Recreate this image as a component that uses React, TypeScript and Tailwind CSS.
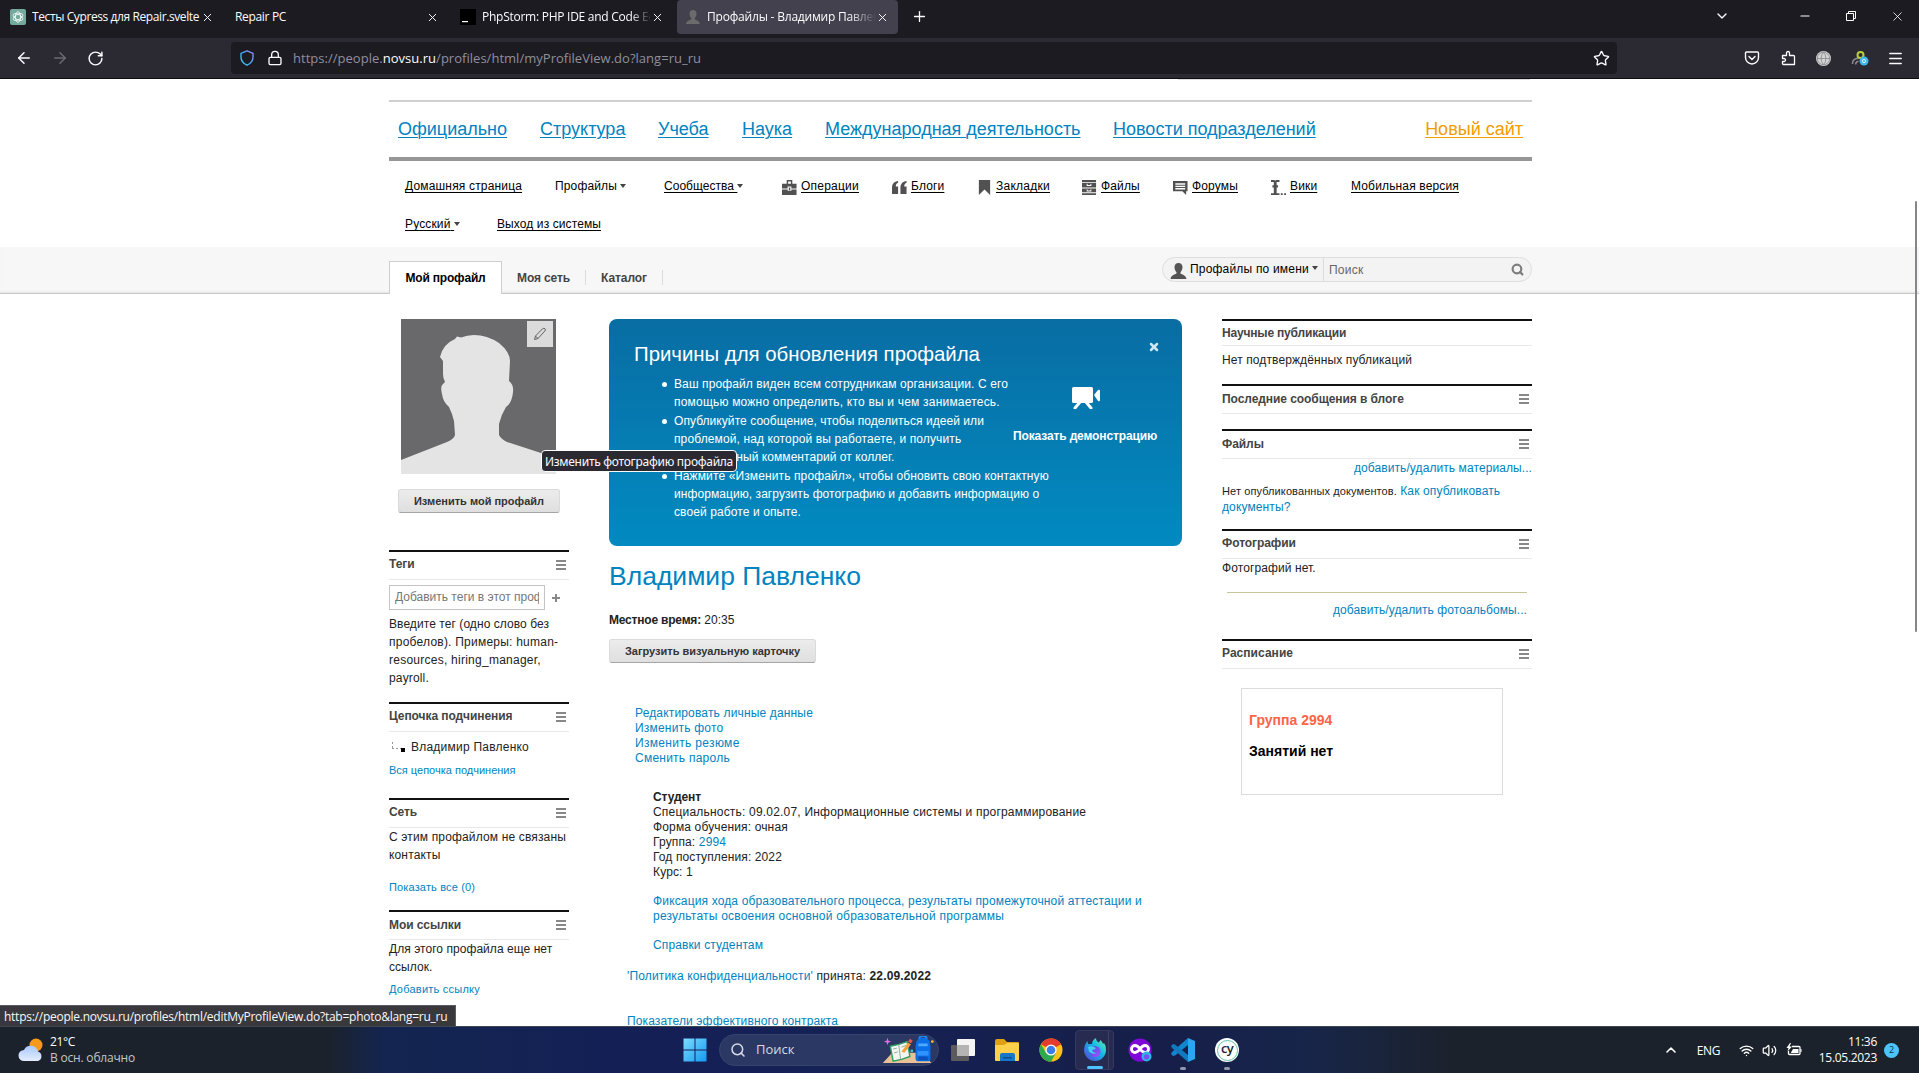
import React from "react";
import {
  ArrowLeft,
  ArrowRight,
  ChevronDown,
  ChevronUp,
  Globe,
  Lock,
  Menu,
  Minus,
  Plus,
  RotateCw,
  Search,
  Star,
  Volume2,
  Wifi,
  X,
} from "lucide-react";

/* ---------- browser chrome ---------- */

function Tab({ icon, title, cls, active }: { icon?: React.ReactNode; title: string; cls: string; active?: boolean }) {
  return (
    <div className={"mr-1 flex h-[34px] w-[221px] items-center pl-2 " + (active ? "rounded bg-[#42414d]" : "")}>
      {icon && <span className="mr-[6px] flex h-4 w-4 shrink-0 items-center justify-center">{icon}</span>}
      <span className={"grow overflow-hidden whitespace-nowrap text-[12px] text-[#fbfbfe] " + cls}>{title}</span>
      <X className="mr-[9px] h-[13px] w-[13px] shrink-0 text-[#fbfbfe]" strokeWidth={1.8} />
    </div>
  );
}

function BrowserChrome() {
  return (
    <header className="shrink-0 font-['Open_Sans',sans-serif]">
      <div className="flex h-[38px] bg-[#1c1b22]">
        <div className="flex grow pl-[2px]">
          <Tab
            title="Тесты Cypress для Repair.svelte"
            cls="tracking-[-0.4px]"
            icon={
              <svg viewBox="0 0 16 16" className="h-4 w-4">
                <rect width="16" height="16" rx="2" fill="#74a99b" />
                <g fill="none" stroke="#fff" strokeWidth="0.8">
                  <ellipse cx="8" cy="8" rx="2.600" ry="5.300" />
                  <ellipse cx="8" cy="8" rx="2.600" ry="5.300" transform="rotate(60 8 8)" />
                  <ellipse cx="8" cy="8" rx="2.600" ry="5.300" transform="rotate(120 8 8)" />
                </g>
              </svg>
            }
          />
          <Tab title="Repair PC" cls="tracking-[-0.33px]" />
          <Tab
            title="PhpStorm: PHP IDE and Code Editor"
            cls="tracking-[-0.26px] [mask-image:linear-gradient(to_right,black_88%,transparent)]"
            icon={
              <svg viewBox="0 0 16 16" className="h-4 w-4">
                <rect width="16" height="16" fill="#000" />
                <rect x="2" y="12" width="6" height="1.200" fill="#fff" />
              </svg>
            }
          />
          <Tab
            active
            title="Профайлы - Владимир Павленко"
            cls="tracking-[-0.2px] [mask-image:linear-gradient(to_right,black_84%,transparent)]"
            icon={<PersonIcon className="h-[14px] w-[14px] text-[#6b6b6b]" />}
          />
          <Plus className="mt-[8px] ml-[9px] h-[17px] w-[17px] text-[#fbfbfe]" strokeWidth={1.8} />
        </div>
        <div className="flex items-center pb-[6px] text-[#fbfbfe]">
          <ChevronDown className="mr-[68px] h-4 w-4" strokeWidth={2} />
          <Minus className="mr-[33px] h-[14px] w-[14px]" strokeWidth={1.8} />
          <svg viewBox="0 0 12 12" className="mr-[33px] h-3 w-3" fill="none" stroke="#fff">
            <path d="M1.500 3.500h7v7h-7zM3.500 3.500v-2h7v7h-2" />
          </svg>
          <X className="mr-[14px] h-[15px] w-[15px]" strokeWidth={1.3} />
        </div>
      </div>
      <div className="flex h-[41px] items-center border-b border-[#0d0c11] bg-[#2b2a33] text-[#fbfbfe]">
        <div className="flex w-[231px] items-center pl-[15px]">
          <ArrowLeft className="h-[18px] w-[18px]" strokeWidth={2} />
          <ArrowRight className="ml-[18px] h-[18px] w-[18px] text-[#6b6a72]" strokeWidth={2} />
          <RotateCw className="ml-[18px] h-[17px] w-[17px]" strokeWidth={2.1} />
        </div>
        <div className="flex h-8 w-[1386px] items-center rounded bg-[#1c1b22]">
          <svg viewBox="0 0 16 16" className="ml-[8px] h-4 w-4" fill="none">
            <defs>
              <linearGradient id="shield" x1="1" y1="0" x2="0" y2="1">
                <stop offset="0" stopColor="#9a84f5" />
                <stop offset="0.500" stopColor="#3fa6f2" />
                <stop offset="1" stopColor="#3ed0ee" />
              </linearGradient>
            </defs>
            <path d="M8 .800L14 3.300V7q0 5.500-6 8.200Q2 12.500 2 7V3.300z" stroke="url(#shield)" strokeWidth="1.400" strokeLinejoin="round" />
          </svg>
          <Lock className="ml-[12px] h-4 w-4" strokeWidth={2} />
          <span className="ml-[10px] grow pt-px text-[13px] tracking-[0.024px] text-[#8f8f9d]">
            https://people.<span className="text-[#fbfbfe]">novsu.ru</span>/profiles/html/myProfileView.do?lang=ru_ru
          </span>
          <Star className="mr-[7px] h-[17px] w-[17px]" strokeWidth={1.9} />
        </div>
        <div className="flex grow items-center justify-end pr-[15px]">
          <svg viewBox="0 0 16 16" className="h-4 w-4" fill="none" stroke="currentColor" strokeWidth="1.400" strokeLinecap="round">
            <path d="M2.500 2h11a1 1 0 0 1 1 1v4.500a6.500 6.500 0 0 1-13 0V3a1 1 0 0 1 1-1z" />
            <path d="M5 6.500l3 3 3-3" />
          </svg>
          <svg viewBox="0 0 16 16" className="ml-[20px] h-4 w-4" fill="none" stroke="currentColor" strokeWidth="1.300" strokeLinejoin="round">
            <path d="M2.500 5.500h4V3a1.500 1.500 0 0 1 3 0v2.500h4a1 1 0 0 1 1 1v8h-11a1 1 0 0 1-1-1v-2h1.500a1.500 1.500 0 0 0 0-3H2.500z" />
          </svg>
          <span className="ml-[20px] h-[15px] w-[15px] rounded-full bg-[#d3d3d3] text-[#8d8c90]">
            <Globe className="h-[15px] w-[15px]" strokeWidth={1.4} />
          </span>
          <svg viewBox="0 0 18 18" className="ml-[20px] h-[18px] w-[18px]" fill="none">
            <path d="M1.500 15a5 5 0 0 1 6-5.500M5 15.500a2.200 2.200 0 0 1 2.500-3" stroke="#8a8a90" strokeWidth="1.600" />
            <circle cx="9.500" cy="6" r="3" stroke="#b9cf35" strokeWidth="2" />
            <circle cx="13" cy="12" r="4.500" fill="#3eb6ee" />
            <circle cx="13" cy="12" r="1.600" stroke="#dff3ff" strokeWidth="1" />
          </svg>
          <Menu className="ml-[18px] h-[17px] w-[17px]" strokeWidth={2.1} />
        </div>
      </div>
    </header>
  );
}

/* ---------- small icons of the portal ---------- */

function PersonIcon({ className }: { className: string }) {
  return (
    <svg viewBox="0 0 16 16" className={className} fill="currentColor">
      <path d="M8 0c2.600 0 4 1.800 4 4.300 0 2-.9 3.900-2 4.900v1.300c1 .9 5.500 1.500 6 5.500H0c.5-4 5-4.600 6-5.500V9.200c-1.100-1-2-2.900-2-4.900C4 1.800 5.400 0 8 0z" />
    </svg>
  );
}

const glyphs = {
  ops: (
    <>
      <path d="M5 0h6v4h4.500v5H10V7H6v2H0V4h5zM6.500 1.500V4h3V1.500zM0 10h6v1.500h4V10h5.500v6H0z" fillRule="evenodd" />
      <path d="M7.300 8h1.500v3H7.300z" />
    </>
  ),
  blogs: <path d="M6.500 1v2C5 3.500 4 5 4 7h2.500v8H0V8c0-4 2.500-6.500 6.500-7zM15.500 1v2C14 3.500 13 5 13 7h2.500v8H9V8c0-4 2.500-6.500 6.500-7z" />,
  marks: <path d="M2 0h12v16l-6-6-6 6z" />,
  files: (
    <path
      d="M0 0h15v2H0zM0 3h15v5H0zM0 9h15v4H0zM0 14h15v2H0zM5 4v2.500h5V4H9v1.300H6V4zM5 10v2.300h5V10H9v1.200H6V10z"
      fillRule="evenodd"
    />
  ),
  forums: <path d="M0 1h15.500v11H14v4l-4-4H0zM2.500 3.500V5h10.500V3.500zM2.500 6v1.500h10.500V6zM2.500 8.500V10h10.500V8.500z" fillRule="evenodd" />,
  wiki: <path d="M0 0h3.500l1 .7L5.500 0H9v2H6v3.500h1.500V8H6v6h3v2H0v-2h3V8H1.500V5.500H3V2H0zM10.500 14h2v2h-2zM14 14h2v2h-2z" />,
};

function Caret({ cls }: { cls: string }) {
  return <span className={"inline-block border-x-[3.500px] border-t-4 border-x-transparent border-t-[#444] align-middle " + cls} />;
}

function MenuLink({
  w,
  icon,
  caret,
  plain,
  cls = "tracking-[0.15px]",
  children,
}: {
  w: string;
  icon?: keyof typeof glyphs;
  caret?: boolean;
  plain?: boolean;
  cls?: string;
  children: string;
}) {
  return (
    <span className={"flex shrink-0 items-center whitespace-nowrap " + w}>
      {icon && (
        <svg viewBox="0 0 16 16" className="mt-[3px] mr-[4px] h-[15px] w-[15px] shrink-0" fill="#515151">
          {glyphs[icon]}
        </svg>
      )}
      <span className={cls + (plain ? "" : " underline underline-offset-2")}>
        {children}
        {caret && !plain && "\u00a0"}
      </span>
      {caret && <Caret cls={plain ? "ml-[3px]" : "ml-0"} />}
    </span>
  );
}

function MainNav() {
  const link = "shrink-0 whitespace-nowrap underline underline-offset-2 decoration-1";
  return (
    <>
      <div className="mt-[21px] flex h-[61px] items-center border-t-2 border-b-4 border-t-[#cfcfcf] border-b-[#969696] pr-[9px] pl-[9px] text-[18px] text-[#0083c0]">
        <a className={link + " w-[142px]"}>Официально</a>
        <a className={link + " w-[118px]"}>Структура</a>
        <a className={link + " w-[84px]"}>Учеба</a>
        <a className={link + " w-[83px]"}>Наука</a>
        <a className={link + " w-[288px]"}>Международная деятельность</a>
        <a className={link}>Новости подразделений</a>
        <a className={link + " ml-auto text-[#f29c00]"}>Новый сайт</a>
      </div>
      <nav className="h-[86px] pt-[6px] pl-[16px] text-[12px] text-black">
        <div className="flex h-[38px] items-center">
          <MenuLink w="w-[150px]" cls="tracking-[0.17px]">Домашняя страница</MenuLink>
          <MenuLink w="w-[109px]" plain caret>Профайлы</MenuLink>
          <MenuLink w="w-[118px]" caret cls="tracking-[0.03px]">Сообщества</MenuLink>
          <MenuLink w="w-[110px]" icon="ops" cls="tracking-[0.23px]">Операции</MenuLink>
          <MenuLink w="w-[85px]" icon="blogs">Блоги</MenuLink>
          <MenuLink w="w-[105px]" icon="marks" cls="tracking-[0.26px]">Закладки</MenuLink>
          <MenuLink w="w-[91px]" icon="files">Файлы</MenuLink>
          <MenuLink w="w-[98px]" icon="forums">Форумы</MenuLink>
          <MenuLink w="w-[80px]" icon="wiki">Вики</MenuLink>
          <MenuLink w="">Мобильная версия</MenuLink>
        </div>
        <div className="flex h-[38px] items-center">
          <MenuLink w="w-[92px]" caret>Русский</MenuLink>
          <MenuLink w="" cls="tracking-[0.1px]">Выход из системы</MenuLink>
        </div>
      </nav>
    </>
  );
}

function TabStrip() {
  return (
    <div className="h-[47px] border-b border-[#c9c9c9] bg-[#f7f7f7] pl-[389px] shadow-[inset_0_-2px_2px_-1px_#e4e4e4]">
      <div className="flex h-[47px] w-[1143px] items-end text-[12px] font-bold text-[#444]">
        <span className="flex h-[33px] w-[113px] items-center justify-center border border-b-0 border-[#cfcfcf] bg-white tracking-[-0.19px] text-black">
          Мой профайл
        </span>
        <span className="flex h-[33px] items-center pl-[15px] tracking-[-0.12px]">Моя сеть</span>
        <span className="mb-[9px] ml-[15px] h-[15px] w-px bg-[#dcdcdc]" />
        <span className="flex h-[33px] items-center pl-[15px] tracking-[-0.07px]">Каталог</span>
        <span className="mb-[9px] ml-[15px] h-[15px] w-px bg-[#dcdcdc]" />
        <div className="mb-[12px] ml-auto flex h-[25px] w-[370px] items-center rounded-full border border-[#dedede] bg-[#f3f3f3] font-normal">
          <PersonIcon className="mt-[2px] ml-[7px] h-4 w-[17px] text-[#555]" />
          <span className="ml-[3px] pb-px tracking-[0.19px] whitespace-nowrap text-black">Профайлы по имени</span>
          <span className="mb-[4px]">
            <Caret cls="ml-[3px]" />
          </span>
          <span className="ml-[5px] h-full w-px bg-[#dcdcdc]" />
          <span className="ml-[5px] grow tracking-[0.3px] text-[#666]">Поиск</span>
          <Search className="mr-[7px] h-[13px] w-[13px] text-[#7d7d7d]" strokeWidth={4} />
        </div>
      </div>
    </div>
  );
}

/* ---------- widgets ---------- */

function Head({
  title,
  menu = true,
  cls = "tracking-[-0.07px]",
  pad = "pt-[3px]",
}: {
  title: string;
  menu?: boolean;
  cls?: string;
  pad?: string;
}) {
  return (
    <div
      className={
        "flex items-start justify-between border-t-2 border-b border-t-[#111] border-b-[#e8e8e8] " +
        (menu ? "h-[30px]" : "h-[27px]")
      }
    >
      <h2 className={"text-[12px] leading-[18px] font-bold whitespace-nowrap text-[#444] " + pad + " " + cls}>{title}</h2>
      {menu && (
        <span className="mt-[8px] mr-[3px] flex w-[10px] flex-col gap-[2px]">
          <i className="h-[2px] bg-[#888]" />
          <i className="h-[2px] bg-[#888]" />
          <i className="h-[2px] bg-[#888]" />
        </span>
      )}
    </div>
  );
}

function Button({ w, children }: { w: string; children: string }) {
  return (
    <button
      className={
        "block h-[24px] rounded-[3px] border border-[#dadada] border-b-[#a5a5a5] bg-linear-to-b from-[#ececec] to-[#dfdfdf] pb-px text-center text-[11px] leading-[22px] font-bold whitespace-nowrap text-[#333] " +
        w
      }
    >
      {children}
    </button>
  );
}

function LeftColumn() {
  return (
    <aside className="w-[180px] text-[12px] leading-[18px] text-[#222]">
      <div className="relative ml-3 h-[155px] w-[155px]">
        <svg viewBox="0 0 155 155" className="h-[155px] w-[155px]">
          <rect width="155" height="155" fill="#69696b" />
          <path
            d="M0 155V141L46 123Q53 120 54 116L53 102Q51 94 48 88Q42 83 41 75Q39 67 42 65L44 63Q42 59 42 55V42L39 38Q42 25 54 20L56 17.500L60 18.500Q66 16 73 16Q86 16 98 24Q109 33 109 42L108 62Q113 66 112 73Q111 84 105 88Q100 96 98 105V116Q100 120 106 123L140 134L155 140V155Z"
            fill="#e4e4e4"
          />
        </svg>
        <span className="absolute top-[2px] right-[3px] flex h-[26px] w-[26px] items-center justify-center bg-[#dbdbdb]">
          <svg viewBox="0 0 14 14" className="h-[14px] w-[14px]" fill="none" stroke="#555" strokeWidth="0.9">
            <path d="M1.500 12.500l1-3.500L9.500 1.800q1.500-1 2.500 0t-.2 2.200L5 11.500zM2.500 9l2.500 2.500" />
          </svg>
        </span>
      </div>
      <div className="mt-[15px] mb-[37px] pl-[9px]">
        <Button w="w-[162px]">Изменить мой профайл</Button>
      </div>

      <Head title="Теги" />
      <div className="mt-[5px] flex items-center">
        <div className="h-[25px] w-[156px] border border-[#c4c4c4] px-[5px] leading-[23px] text-[#777]">
          <div className="overflow-hidden whitespace-nowrap">Добавить теги в этот профайл</div>
        </div>
        <svg viewBox="0 0 8 8" className="ml-[7px] h-2 w-2" fill="#888">
          <path d="M3 0h2v3h3v2H5v3H3V5H0V3h3z" />
        </svg>
      </div>
      <p className="mt-[5px] mb-[15px]">
        <span className="tracking-[0.07px]">Введите тег (одно слово без</span>
        <br />
        <span className="tracking-[0.23px]">пробелов). Примеры: human-</span>
        <br />
        <span className="tracking-[0.25px]">resources, hiring_manager,</span>
        <br />
        <span className="tracking-[0.15px]">payroll.</span>
      </p>

      <Head title="Цепочка подчинения" />
      <div className="mt-[6px] flex h-[18px] items-center whitespace-nowrap">
        <svg viewBox="0 0 16 12" className="mt-[2px] ml-[2px] h-3 w-4">
          <path d="M1.500 0v6M1 6.500h10" stroke="#999" strokeDasharray="2 2" fill="none" />
          <path d="M10 6h4v4h-4z" fill="#000" />
        </svg>
        <span className="ml-[4px] tracking-[0.23px]">Владимир Павленко</span>
      </div>
      <a className="mt-[5px] mb-[19px] block text-[11px] text-[#0083c0]">Вся цепочка подчинения</a>

      <Head title="Сеть" />
      <p className="tracking-[0.15px] whitespace-nowrap">
        С этим профайлом не связаны
        <br />
        контакты
      </p>
      <a className="mt-[14px] mb-[14px] block text-[11px] tracking-[0.15px] text-[#0083c0]">Показать все (0)</a>

      <Head title="Мои ссылки" pad="pt-[4px]" />
      <p className="tracking-[0.05px] whitespace-nowrap">
        Для этого профайла еще нет
        <br />
        ссылок.
      </p>
      <a className="mt-[4px] block text-[11px] tracking-[0.24px] text-[#0083c0]">Добавить ссылку</a>
    </aside>
  );
}

function Bullet({ lines }: { lines: [string, string][] }) {
  return (
    <li className="relative mb-px">
      <i className="absolute top-[7px] -left-[12px] h-[5px] w-[5px] rounded-full bg-white" />
      {lines.map(([text, cls]) => (
        <div key={text} className={cls}>
          {text}
        </div>
      ))}
    </li>
  );
}

function MiddleColumn() {
  return (
    <main className="ml-[40px] w-[573px] text-[12px] text-[#222]">
      <section className="relative h-[227px] rounded-lg bg-linear-to-b from-[#086da3] to-[#018bc1] pt-[20px] pl-[25px] text-white">
        <h2 className="text-[20.4px] leading-[30px] tracking-[-0.02px] whitespace-nowrap">Причины для обновления профайла</h2>
        <ul className="mt-[6px] ml-[40px] leading-[18px] whitespace-nowrap">
          <Bullet
            lines={[
              ["Ваш профайл виден всем сотрудникам организации. С его", "tracking-[0.1px]"],
              ["помощью можно определить, кто вы и чем занимаетесь.", "tracking-[0.2px]"],
            ]}
          />
          <Bullet
            lines={[
              ["Опубликуйте сообщение, чтобы поделиться идеей или", "tracking-[0.06px]"],
              ["проблемой, над которой вы работаете, и получить", "tracking-[0.12px]"],
              ["моментальный комментарий от коллег.", "tracking-[0.06px]"],
            ]}
          />
          <Bullet
            lines={[
              ["Нажмите «Изменить профайл», чтобы обновить свою контактную", "tracking-[0.12px]"],
              ["информацию, загрузить фотографию и добавить информацию о", "tracking-[0.07px]"],
              ["своей работе и опыте.", "tracking-[0.1px]"],
            ]}
          />
        </ul>
        <X className="absolute top-[22px] right-[22px] h-[12px] w-[12px] text-[#cfe6f3]" strokeWidth={5} />
        <div className="absolute top-[68px] right-[25px] flex w-[144px] flex-col items-center">
          <svg viewBox="0 0 28 22" className="ml-[2px] h-[22px] w-[28px]" fill="#fff">
            <rect width="21" height="16" rx="1.500" />
            <path d="M22 8l4-5q2-1 2 1v9q0 2-2 1z" />
            <path d="M8 15L3 21M14 15l5 6" stroke="#fff" strokeWidth="3" strokeLinecap="round" />
          </svg>
          <b className="mt-[18px] leading-[18px] tracking-[-0.13px] whitespace-nowrap">Показать демонстрацию</b>
        </div>
      </section>

      <h1 className="mt-[11px] text-[26.5px] leading-[38px] text-[#0083c0]">Владимир Павленко</h1>
      <p className="mt-[16px] leading-[18px]">
        <b className="tracking-[-0.2px]">Местное время:</b> 20:35
      </p>
      <div className="mt-[10px]">
        <Button w="w-[207px]">Загрузить визуальную карточку</Button>
      </div>

      <div className="mt-[43px] ml-[26px] leading-[15px] tracking-[0.16px] text-[#0083c0]">
        <div>Редактировать личные данные</div>
        <div className="tracking-[0.2px]">Изменить фото</div>
        <div className="tracking-[0.32px]">Изменить резюме</div>
        <div className="tracking-[0.24px]">Сменить пароль</div>
      </div>
      <div className="mt-[24px] ml-[44px] leading-[15px] tracking-[0.14px] whitespace-nowrap">
        <b className="tracking-[-0.1px]">Студент</b>
        <div className="tracking-[0.2px]">Специальность: 09.02.07, Информационные системы и программирование</div>
        <div>Форма обучения: очная</div>
        <div>
          Группа: <a className="text-[#0083c0]">2994</a>
        </div>
        <div className="tracking-[0.11px]">Год поступления: 2022</div>
        <div>Курс: 1</div>
        <div className="mt-[14px] text-[#0083c0]">
          <div className="tracking-[0.15px]">Фиксация хода образовательного процесса, результаты промежуточной аттестации и</div>
          <div className="tracking-[0.22px]">результаты освоения основной образовательной программы</div>
        </div>
        <div className="mt-[14px] tracking-[0.12px] text-[#0083c0]">Справки студентам</div>
      </div>
      <p className="mt-[16px] ml-[18px] leading-[15px] tracking-[0.15px]">
        <a className="text-[#0083c0]">'Политика конфиденциальности'</a> принята: <b>22.09.2022</b>
      </p>
      <p className="mt-[30px] ml-[18px] leading-[15px] tracking-[0.13px] text-[#0083c0]">Показатели эффективного контракта</p>
    </main>
  );
}

function RightColumn() {
  return (
    <aside className="ml-[40px] w-[310px] text-[12px] leading-[18px] text-[#222]">
      <Head title="Научные публикации" menu={false} cls="tracking-[-0.18px]" />
      <p className="mt-[5px] mb-[15px] tracking-[0.11px]">Нет подтверждённых публикаций</p>
      <Head title="Последние сообщения в блоге" pad="pt-[4px]" />
      <div className="mt-[15px]">
        <Head title="Файлы" pad="pt-[4px]" />
      </div>
      <p className="text-right tracking-[0.085px] text-[#0083c0]">добавить/удалить материалы...</p>
      <p className="mt-[6px] mb-[14px] leading-[16px]">
        <span className="text-[11px] tracking-[0.1px]">Нет опубликованных документов.</span>{" "}
        <a className="tracking-[0.12px] text-[#0083c0]">
          Как опубликовать
          <br />
          документы?
        </a>
      </p>
      <Head title="Фотографии" />
      <p className="tracking-[0.1px]">Фотографий нет.</p>
      <div className="mx-[5px] mt-[15px] mb-[20px] border-t border-[#c8c59c] pt-[8px] text-right tracking-[0.07px] text-[#0083c0]">
        добавить/удалить фотоальбомы...
      </div>
      <Head title="Расписание" cls="tracking-[0.04px]" />
      <div className="mt-[19px] ml-[19px] h-[107px] w-[262px] border border-[#dcdcdc] pt-[20px] pl-[7px] text-[14px] font-bold">
        <p className="leading-[22px] text-[#ff6347]">Группа 2994</p>
        <p className="mt-[9px] leading-[22px] text-black">Занятий нет</p>
      </div>
    </aside>
  );
}

/* ---------- taskbar ---------- */

function TaskIcons() {
  return (
    <>
      <svg viewBox="0 0 24 24" className="h-6 w-6">
        <defs>
          <linearGradient id="win" x1="0" y1="0" x2="1" y2="1">
            <stop offset="0" stopColor="#7ddcff" />
            <stop offset="1" stopColor="#149af0" />
          </linearGradient>
        </defs>
        <path d="M.500.500h11v11H.500zM12.500.500h11v11h-11zM.500 12.500h11v11H.500zM12.500 12.500h11v11h-11z" fill="url(#win)" />
      </svg>
      <div className="ml-[12px] flex h-8 w-[220px] items-center rounded-full border border-[#37436a] bg-[#2b3864] text-[#d5d9e6]">
        <Search className="ml-[10px] h-4 w-4" strokeWidth={2.3} />
        <span className="ml-[10px] grow text-[13px]">Поиск</span>
        <svg viewBox="0 0 56 30" className="mr-[2px] h-[28px] w-[54px]">
          <path d="M0 29L10 18H42L52 29z" fill="#e9c197" />
          <path d="M8 11l9-2 9-3 3 16-9 3-9 2z" fill="#f1f6f2" stroke="#2f9e62" strokeWidth="1.500" />
          <path d="M17 9l2 16M11 14l4-1M12 18l4-1M20 12l5-2M21 16l5-2" stroke="#8aa79a" />
          <path d="M20 17l7-10 3 2-7 9z" fill="#f6a13a" />
          <path d="M27 6l2-3 3 2-2 3z" fill="#e8574c" />
          <path d="M5 2l1 3 3 1-3 1-1 3-1-3-3-1 3-1z" fill="#e36be8" />
          <path d="M35 11q0-9 8-9t8 9v13q0 3-3 3H38q-3 0-3-3z" fill="#0a6ee8" />
          <path d="M39 3q0-3 4-3t4 3" fill="none" stroke="#1f8bff" strokeWidth="2" />
          <path d="M38 8h10v3H38z" fill="#4fa9ff" />
          <path d="M37 16h12v5H37z" fill="#2f93ff" />
          <path d="M38 22h10v4H38z" fill="#0b4fb8" />
          <circle cx="53" cy="6" r="1.500" fill="#f5b92f" />
          <circle cx="31" cy="16" r="1.500" fill="#38c4d8" />
        </svg>
      </div>
      <svg viewBox="0 0 24 24" className="ml-[12px] h-6 w-6">
        <rect x="6" y="1" width="18" height="17" rx="1" fill="#f4f4f4" />
        <rect x="0" y="7" width="18" height="16" rx="1" fill="#5b5b5d" />
        <rect x="6" y="7" width="12" height="11" fill="#b4b4b4" />
      </svg>
      <svg viewBox="0 0 26 24" className="ml-[19px] h-6 w-[26px]">
        <path d="M1 3q0-2 2-2h7l3 3h11q1 0 1 1v5H1z" fill="#e0a013" />
        <path d="M1 7h9l3-2h11q1 0 1 1v16q0 1-1 1H2q-1 0-1-1z" fill="#ffd04b" />
        <path d="M6 23v-6q0-2 2-2h11q2 0 2 2v6z" fill="#1477c9" />
        <path d="M9 19h9v1.500H9z" fill="#0b508f" />
      </svg>
      <svg viewBox="0 0 24 24" className="ml-[19px] h-6 w-6">
        <circle cx="12" cy="12" r="11.500" fill="#fbc116" />
        <path d="M12 12L2 6.200A11.500 11.500 0 0 1 22 6.200z" fill="#e33b2e" />
        <path d="M12 .500A11.500 11.500 0 0 1 22 6.500H12z" fill="#e33b2e" />
        <path d="M2 6.200A11.500 11.500 0 0 0 12 23.500L17 15 7 15z" fill="#2da94f" />
        <circle cx="12" cy="12" r="5.600" fill="#fff" />
        <circle cx="12" cy="12" r="4.300" fill="#3b7ded" />
      </svg>
      <div className="relative ml-[12px] flex h-10 w-[39px] items-center rounded border border-[#36395f] bg-[#272b50]">
        <svg viewBox="0 0 24 24" className="ml-[7px] h-6 w-6">
          <defs>
            <linearGradient id="fox" x1="1" y1="0" x2="0" y2="1">
              <stop offset="0" stopColor="#6df5a8" />
              <stop offset="0.450" stopColor="#12b5e8" />
              <stop offset="1" stopColor="#5a3bd8" />
            </linearGradient>
            <linearGradient id="orb" x1="0" y1="0" x2="1" y2="1">
              <stop offset="0" stopColor="#3a52d8" />
              <stop offset="1" stopColor="#b04cff" />
            </linearGradient>
          </defs>
          <path
            d="M1 12q0-4 2-7l1.500-2 .5 3 4 0q0-4 4-6 0 3 3 4.500l1.500-2.500q2 2 2.500 4l1-1q2.500 3 2 7a11 11 0 0 1-22 0z"
            fill="url(#fox)"
          />
          <circle cx="12" cy="13.500" r="5.500" fill="url(#orb)" />
          <path d="M5 9q4-2 8 1-1 2-4 2 1 3 5 3-5 2-8-1.500z" fill="#3fd0f0" />
        </svg>
        <i className="absolute bottom-0 left-[11px] h-[3px] w-4 rounded-full bg-[#4cc2ff]" />
        <i className="absolute top-0 right-[4px] h-full w-px bg-[#3d416a]" />
      </div>
      <svg viewBox="0 0 24 24" className="ml-[14px] h-6 w-6">
        <circle cx="12" cy="12" r="11.500" fill="#7d0ad6" />
        <path
          d="M12 11q-2.500-3.500-5-3.500a3.300 3.300 0 0 0 0 7Q9.500 14.500 12 11q2.500-3.500 5-3.500a3.300 3.300 0 0 1 0 7q-2.500 0-5-3.500z"
          fill="none"
          stroke="#fff"
          strokeWidth="2.800"
        />
        <circle cx="18.500" cy="18.500" r="5" fill="#2bb5e6" />
        <circle cx="18.500" cy="18.800" r="2.600" fill="#7c4df0" />
      </svg>
      <div className="relative ml-[19px] h-6 w-6">
        <svg viewBox="0 0 24 24" className="h-6 w-6">
          <path d="M17 0l7 3v18l-7 3z" fill="#2aa7f0" />
          <path d="M17 0L1 14l-1 2 2 2 2-.500L17 7z" fill="#1285cf" />
          <path d="M17 24L1 10 0 8l2-2 2 .500L17 17z" fill="#1079bf" />
        </svg>
        <i className="absolute -bottom-[8px] left-[9px] h-[3px] w-[6px] rounded-full bg-[#9297ab]" />
      </div>
      <div className="relative ml-[20px] h-6 w-6">
        <span className="flex h-6 w-6 items-center justify-center rounded-full bg-white p-px">
          <span className="flex h-[21px] w-[21px] items-center justify-center rounded-full border border-[#5fc3a0] pb-[3px] text-[13px] font-semibold tracking-[-0.8px] text-[#1b1e2e]">
            cy
          </span>
        </span>
        <i className="absolute -bottom-[8px] left-[9px] h-[3px] w-[6px] rounded-full bg-[#9297ab]" />
      </div>
    </>
  );
}

function Taskbar() {
  return (
    <footer className="flex h-[47px] shrink-0 items-center border-t border-[#3f4650] bg-[linear-gradient(90deg,#1c222b_0%,#1c222b_17%,#132550_20%,#141f56_34%,#152255_44%,#161e49_60%,#17254a_68%,#1c222b_76%,#1c222b_100%)] font-['Open_Sans',sans-serif] text-[12px] text-white">
      <div className="flex w-[683px] items-center pl-[18px]">
        <svg viewBox="0 0 26 24" className="h-6 w-[26px]">
          <defs>
            <linearGradient id="cloud" x1="0" y1="0" x2="0" y2="1">
              <stop offset="0" stopColor="#a9c8fb" />
              <stop offset="1" stopColor="#e4edfd" />
            </linearGradient>
          </defs>
          <circle cx="18" cy="7" r="6.500" fill="#f79a1b" />
          <path d="M6 23a5.500 5.500 0 0 1 0-11 7.500 7.500 0 0 1 14 1.500A5 5 0 0 1 20 23z" fill="url(#cloud)" />
        </svg>
        <div className="ml-[6px] leading-[16px]">
          <div className="tracking-[-0.4px]">21°C</div>
          <div className="tracking-[-0.19px] text-[#c4c7ca]">В осн. облачно</div>
        </div>
      </div>
      <TaskIcons />
      <div className="ml-auto flex items-center pr-[20px]">
        <ChevronUp className="h-4 w-4" strokeWidth={2.4} />
        <span className="ml-[18px] pt-px tracking-[-0.4px]">ENG</span>
        <Wifi className="ml-[19px] h-[15px] w-[15px]" strokeWidth={2.2} />
        <Volume2 className="ml-[8px] h-[15px] w-[15px]" strokeWidth={2} />
        <svg viewBox="0 0 16 14" className="ml-[9px] h-[14px] w-4" fill="none" stroke="#fff" strokeWidth="1.300">
          <path d="M6 3.500h7q1 0 1 1v6q0 1-1 1H3.500q-1 0-1-1V8" />
          <path d="M5 9.500L7 6h5.500v4H5zM14.500 6h1v3h-1z" fill="#fff" stroke="none" />
          <path d="M4 0L.500 5h2L1.500 8.500 6 3.500H3.500L5 0z" fill="#fff" stroke="none" />
        </svg>
        <div className="ml-[15px] w-[60px] text-right leading-[16px] tracking-[-0.3px]">
          <div>11:36</div>
          <div>15.05.2023</div>
        </div>
        <span className="ml-[7px] flex h-[15px] w-[15px] items-center justify-center rounded-full bg-[#4cc2ff] text-[9px] text-[#12303f]">2</span>
      </div>
    </footer>
  );
}

export default function App() {
  return (
    <div className="relative flex h-[1073px] w-[1919px] flex-col overflow-hidden bg-white font-['Liberation_Sans',Arial,sans-serif]">
      <BrowserChrome />
      <div className="h-0 grow overflow-hidden">
        <div className="relative ml-[389px] w-[1143px]">
          <i className="absolute -top-[21px] right-[2px] h-px w-[352px] bg-[#dcdcdc]" />
          <MainNav />
        </div>
        <TabStrip />
        <div className="ml-[389px] flex w-[1143px] items-start pt-[25px]">
          <LeftColumn />
          <MiddleColumn />
          <RightColumn />
        </div>
      </div>
      <Taskbar />

      <i className="absolute top-[201px] right-[2px] h-[431px] w-[2px] rounded bg-[#85858a]" />
      <span className="absolute top-[450px] left-[541px] flex h-[22px] w-[196px] items-center justify-center rounded border border-white bg-[#2b2a33] pt-[2px] font-['Noto_Sans',sans-serif] text-[12px] tracking-[-0.28px] whitespace-nowrap text-[#fbfbfe]">
        Изменить фотографию профайла
      </span>
      <span className="absolute top-[1005px] left-0 flex h-[21px] w-[456px] items-center border-t border-r border-[#5c5b61] bg-[#38383d] pt-px pl-[4px] font-['Open_Sans',sans-serif] text-[12px] tracking-[-0.256px] whitespace-nowrap text-[#f9f9fa]">
        https://people.novsu.ru/profiles/html/editMyProfileView.do?tab=photo&amp;lang=ru_ru
      </span>
    </div>
  );
}
